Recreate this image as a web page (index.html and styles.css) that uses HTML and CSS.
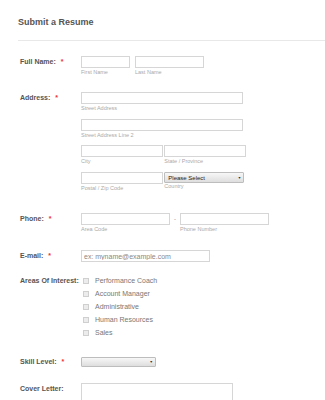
FILE: index.html
```html
<!DOCTYPE html>
<html>
<head>
<meta charset="utf-8">
<link rel="stylesheet" href="styles.css">
</head>
<body>
<div class="page">
  <h1 class="title">Submit a Resume</h1>
  <div class="divider"></div>
  <ul class="fields">
    <li class="row row-name">
      <div class="label">Full Name: <span class="req">*</span></div>
      <div class="control">
        <div class="line">
          <div class="field"><input class="box w-first" type="text"><div class="sub">First Name</div></div>
          <div class="field"><input class="box w-last" type="text"><div class="sub">Last Name</div></div>
        </div>
      </div>
    </li>
    <li class="row row-address">
      <div class="label">Address: <span class="req">*</span></div>
      <div class="control stack">
        <div class="field"><input class="box w-street" type="text"><div class="sub">Street Address</div></div>
        <div class="field"><input class="box w-street" type="text"><div class="sub">Street Address Line 2</div></div>
        <div class="line tight">
          <div class="field"><input class="box w-half" type="text"><div class="sub">City</div></div>
          <div class="field"><input class="box w-half" type="text"><div class="sub">State / Province</div></div>
        </div>
        <div class="line tight">
          <div class="field"><input class="box w-half" type="text"><div class="sub">Postal / Zip Code</div></div>
          <div class="field"><div class="select w-country"><span class="select-text">Please Select</span><span class="arrow">&#9660;</span></div><div class="sub sub-up">Country</div></div>
        </div>
      </div>
    </li>
    <li class="row row-phone">
      <div class="label">Phone: <span class="req">*</span></div>
      <div class="control">
        <div class="line">
          <div class="field"><input class="box w-phone" type="text"><div class="sub">Area Code</div></div>
          <span class="dash">-</span>
          <div class="field"><input class="box w-phone" type="text"><div class="sub">Phone Number</div></div>
        </div>
      </div>
    </li>
    <li class="row row-email">
      <div class="label">E-mail: <span class="req">*</span></div>
      <div class="control">
        <input class="box w-email email" type="text" placeholder="ex: myname@example.com">
      </div>
    </li>
    <li class="row row-areas">
      <div class="label label-top">Areas Of Interest:</div>
      <div class="control options">
        <label class="option"><span class="check"></span>Performance Coach</label>
        <label class="option"><span class="check"></span>Account Manager</label>
        <label class="option"><span class="check"></span>Administrative</label>
        <label class="option"><span class="check"></span>Human Resources</label>
        <label class="option"><span class="check"></span>Sales</label>
      </div>
    </li>
    <li class="row row-skill">
      <div class="label label-skill">Skill Level: <span class="req">*</span></div>
      <div class="control">
        <div class="select w-skill"><span class="select-text"></span><span class="arrow">&#9660;</span></div>
      </div>
    </li>
    <li class="row row-cover">
      <div class="label label-cover">Cover Letter:</div>
      <div class="control">
        <div class="textarea"></div>
      </div>
    </li>
  </ul>
</div>
</body>
</html>
```

FILE: styles.css
```css
html, body {
  margin: 0;
  padding: 0;
  background: #fff;
  overflow: hidden;
}
body {
  font-family: "Liberation Sans", Arial, sans-serif;
  color: #555;
}
.page {
  padding-top: 16px;
}
.title {
  margin: 0 0 0 18px;
  font-size: 9px;
  line-height: 12px;
  font-weight: bold;
  color: #555;
}
.divider {
  margin: 12px 0 0 18px;
  border-top: 1px solid #e8e8e8;
}
.fields {
  list-style: none;
  margin: 0;
  padding: 0;
}
.row {
  display: flex;
  align-items: flex-start;
  padding-left: 20px;
}
.label {
  width: 61px;
  flex: none;
  font-size: 7px;
  line-height: 12px;
  font-weight: bold;
  color: #555;
  white-space: nowrap;
}
.req {
  color: #e33;
  margin-left: 3px;
  font-size: 7px;
}
.control {
  display: flex;
  flex-direction: column;
}
.stack {
  gap: 6.7px;
}
.line {
  display: flex;
  gap: 5px;
  align-items: flex-start;
}
.line.tight {
  gap: 1.3px;
}
.field {
  display: flex;
  flex-direction: column;
}
.box {
  box-sizing: border-box;
  height: 12px;
  margin: 0;
  padding: 0 2px;
  border: 1px solid #d6d6d6;
  background: #fff;
  font-family: "Liberation Sans", Arial, sans-serif;
  outline: none;
}
.sub {
  font-size: 5.5px;
  line-height: 8px;
  color: #aaa;
  white-space: nowrap;
}
.sub-up {
  margin-top: -1px;
}
.w-first { width: 49px; }
.w-last { width: 69px; }
.w-street { width: 162px; }
.w-half { width: 82px; }
.w-country { width: 80px; }
.w-phone { width: 89px; }
.w-email { width: 129px; }
.w-skill { width: 75px; }

.email {
  font-size: 7px;
  color: #888;
}
.email::placeholder {
  color: #888;
}
.select {
  box-sizing: border-box;
  display: flex;
  align-items: center;
  justify-content: space-between;
  height: 11px;
  padding: 0 2px 0 3px;
  border: 1px solid #bdbdbd;
  border-radius: 1px;
  background: linear-gradient(#f7f7f7, #dedede);
}
.w-skill {
  height: 10.5px;
}
.select-text {
  font-size: 6px;
  color: #222;
  white-space: nowrap;
}
.arrow {
  font-size: 3.5px;
  color: #333;
}
.dash {
  font-size: 6px;
  line-height: 12px;
  color: #888;
  margin: 0 -1px;
}
.row-name { margin-top: 15px; }
.row-address { margin-top: 16px; }
.row-phone { margin-top: 21px; }
.row-email { margin-top: 17px; }
.row-areas { margin-top: 12px; }
.row-skill { margin-top: 17px; }
.row-cover { margin-top: 15.5px; }

.label-top {
  margin-top: 1px;
}
.label-skill {
  line-height: 10.5px;
}
.label-cover {
  line-height: 11px;
}
.options {
  margin-left: 2px;
}
.option {
  display: flex;
  align-items: center;
  height: 13.1px;
  font-size: 7px;
  color: #777;
  white-space: nowrap;
}
.check {
  box-sizing: border-box;
  width: 6px;
  height: 6px;
  margin-right: 6px;
  margin-top: 1px;
  border: 1px solid #cfcfcf;
  background: #ececec;
}
.textarea {
  box-sizing: border-box;
  width: 152px;
  height: 40px;
  border: 1px solid #d6d6d6;
  background: #fff;
}
```
